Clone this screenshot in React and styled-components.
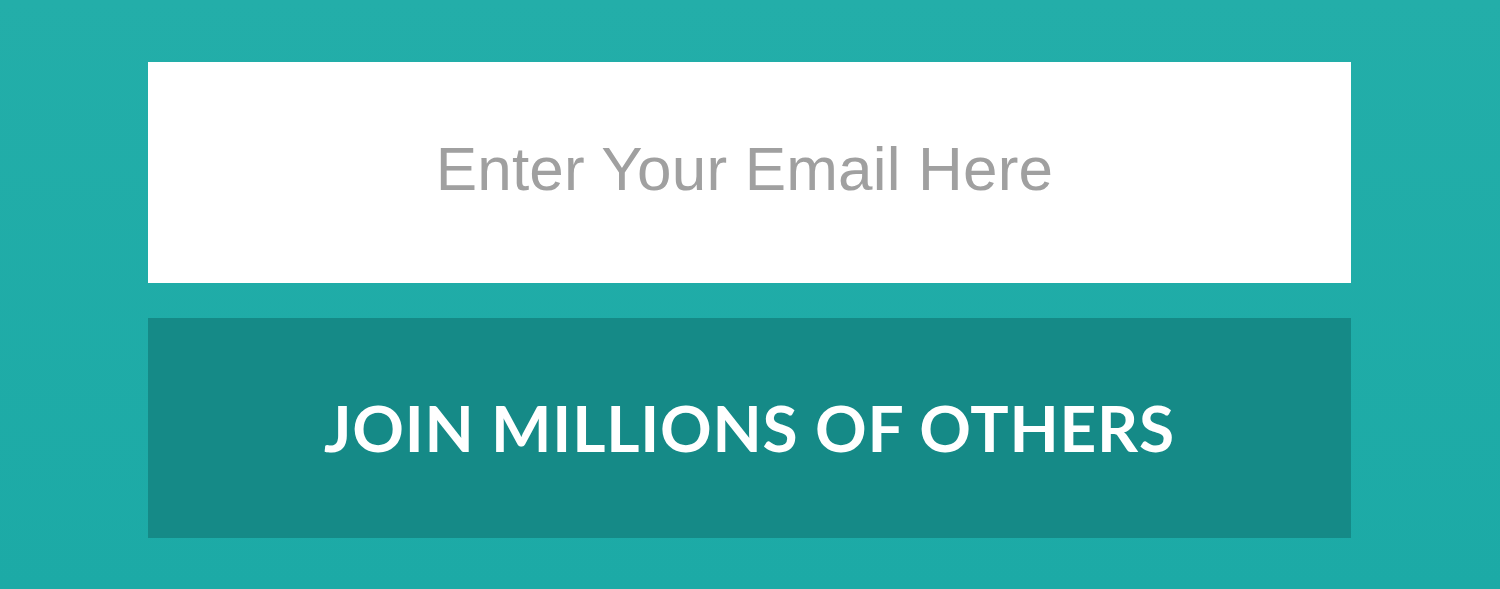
import React from 'react';
import styled, { createGlobalStyle } from 'styled-components';

const GlobalStyle = createGlobalStyle`
    html, body {
        margin: 0;
        padding: 0;
    }
    body {
        background: linear-gradient(180deg, #23aea9 0%, #1caaa6 100%);
        min-height: 589px;
        overflow: hidden;
    }
`;

const Page = styled.div`
    width: 1500px;
    height: 589px;
    padding-top: 62px;
    box-sizing: border-box;
`;

const SignupForm = styled.form`
    width: 1203px;
    margin-left: 148px;
    display: flex;
    flex-direction: column;
    gap: 35px;
`;

const EmailInput = styled.input`
    height: 221px;
    border: none;
    outline: none;
    background: #ffffff;
    text-align: center;
    font-family: "Liberation Sans", Arial, sans-serif;
    font-size: 62px;
    letter-spacing: 0.2px;
    color: #555;
    padding: 0 10px 8px 0;
    box-sizing: border-box;

    &::placeholder {
        color: #a0a0a0;
        opacity: 1;
    }
`;

const JoinButton = styled.button`
    height: 220px;
    border: none;
    background: #158a87;
    color: #ffffff;
    font-family: Lato, "Open Sans", sans-serif;
    font-weight: 700;
    font-size: 64px;
    text-transform: uppercase;
    letter-spacing: 0.8px;
    padding: 0 0 2px;
    cursor: pointer;
`;

export default function App() {
    return (
        <>
            <GlobalStyle />
            <Page>
                <SignupForm onSubmit={(e) => e.preventDefault()}>
                    <EmailInput type="email" placeholder="Enter Your Email Here" />
                    <JoinButton type="submit">Join Millions of Others</JoinButton>
                </SignupForm>
            </Page>
        </>
    );
}
